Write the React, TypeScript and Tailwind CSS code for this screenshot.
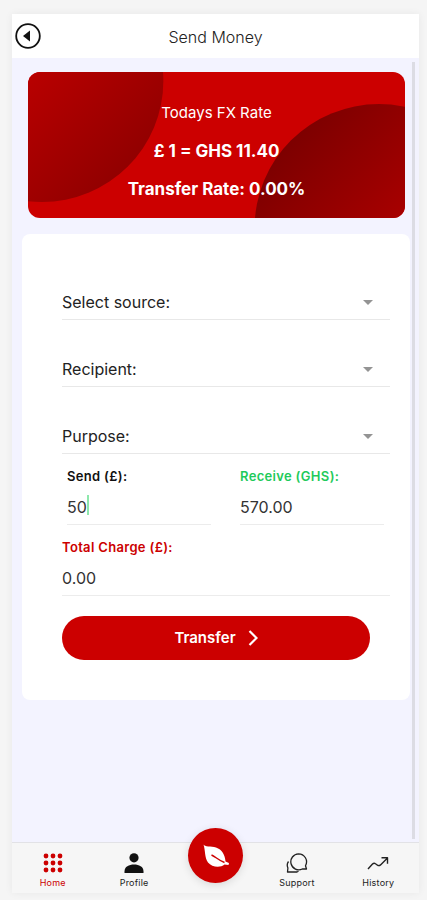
import { useId, type ReactNode } from "react";

function SelectField({ label }: { label: string }) {
  return (
    <div className="relative border-b border-[#e8e8e8]">
      <select
        aria-label={label}
        defaultValue=""
        className="block h-9 w-full appearance-none bg-transparent pt-[2px] text-base text-[#222] outline-none"
      >
        <option value="">{label}</option>
      </select>
      <svg viewBox="0 0 10 5" className="pointer-events-none absolute top-[17px] right-[17px] h-[5px] w-[10px]" fill="#949494">
        <path d="M0 0h10L5 5z" />
      </svg>
    </div>
  );
}

function AmountField({ label, value, tone, caret = false }: { label: string; value: string; tone: string; caret?: boolean }) {
  const id = useId();
  return (
    <div className="relative min-w-0 border-b border-[#ececec]">
      <label htmlFor={id} className={`block text-[13px] leading-5 font-semibold tracking-wide ${tone}`}>
        {label}
      </label>
      <input
        id={id}
        defaultValue={value}
        className="block h-[38px] w-full bg-transparent pt-[3px] text-base text-[#333] outline-none"
      />
      {caret && <span className="absolute top-[29px] left-5 h-5 w-[2px] bg-[#8ee8ac]" />}
    </div>
  );
}

function NavItem({ label, active = false, children }: { label: string; active?: boolean; children: ReactNode }) {
  return (
    <a
      href="#"
      className={`flex flex-1 flex-col items-center gap-1 pt-[10px] text-[9px] leading-3 tracking-wide ${active ? "text-[#cc0000]" : "text-[#222]"}`}
    >
      {children}
      {label}
    </a>
  );
}

export default function App() {
  return (
    <div className="flex min-h-screen flex-col bg-[#f5f5f5] pt-[14px] pr-2 pb-[7px] pl-3 font-['Inter',sans-serif]">
      <div className="flex flex-1 flex-col bg-[#f3f3ff] shadow-[0_0_8px_rgba(0,0,0,0.06)]">
        <header className="grid h-11 grid-cols-[32px_1fr_32px] items-center bg-white">
          <button aria-label="Back" className="flex justify-center">
            <svg viewBox="0 0 26 26" className="size-[26px]" fill="none">
              <circle cx="13" cy="13" r="11.8" stroke="#111" strokeWidth="1.8" />
              <path d="M8 13l7-5.5v11z" fill="#111" />
            </svg>
          </button>
          <h1 className="pt-px text-center text-base font-light text-[#222]">Send Money</h1>
        </header>

        <main className="flex flex-1 border-r-4 border-transparent">
          <div className="min-w-0 flex-1 pt-[14px] pr-[2px] pl-[10px]">
            <section className="relative mr-[5px] ml-[6px] flex h-[146px] flex-col items-center overflow-hidden rounded-xl bg-[#cc0000] pt-[29px] text-white">
              <svg viewBox="0 0 376 146" preserveAspectRatio="none" className="absolute inset-0 size-full">
                <defs>
                  <linearGradient id="leftShade" x1="0.3" y1="0.3" x2="0.85" y2="0.85">
                    <stop stopColor="#c80000" />
                    <stop offset="1" stopColor="#920000" />
                  </linearGradient>
                  <linearGradient id="rightShade" x1="0.1" y1="0.1" x2="0.7" y2="0.65">
                    <stop stopColor="#780000" />
                    <stop offset="1" stopColor="#b80000" />
                  </linearGradient>
                </defs>
                <circle cx="14" cy="9" r="121" fill="url(#leftShade)" />
                <circle cx="350" cy="156" r="124" fill="url(#rightShade)" />
              </svg>
              <p className="relative text-[15px] leading-6">Todays FX Rate</p>
              <p className="relative mt-[14px] text-[17px] leading-6 font-bold">£ 1 = GHS 11.40</p>
              <p className="relative mt-[14px] text-[17px] leading-6 font-bold">Transfer Rate: 0.00%</p>
            </section>

            <form className="mt-4 flex flex-col rounded-lg bg-white pt-[49px] pr-5 pb-10 pl-10">
              <div className="flex flex-col gap-[30px]">
                <SelectField label="Select source:" />
                <SelectField label="Recipient:" />
                <SelectField label="Purpose:" />
              </div>
              <div className="mt-3 mr-[6px] ml-[5px] grid grid-cols-2 gap-[29px]">
                <AmountField label="Send (£):" value="50" tone="text-[#111]" caret />
                <AmountField label="Receive (GHS):" value="570.00" tone="text-[#1fca5b]" />
              </div>
              <div className="mt-3">
                <AmountField label="Total Charge (£):" value="0.00" tone="text-[#cc0000]" />
              </div>
              <button
                type="button"
                className="mt-5 mr-5 flex h-11 items-center justify-center gap-3 rounded-full bg-[#cc0000] text-[15px] font-semibold text-white"
              >
                Transfer
                <svg viewBox="0 0 10 16" className="h-4 w-[10px]" fill="none" stroke="currentColor" strokeWidth="2.2">
                  <path d="M1.5 1l7 7-7 7" />
                </svg>
              </button>
            </form>
          </div>
          <div className="mt-1 mb-[3px] w-[3px] bg-[#dcdce4]" />
        </main>

        <nav className="flex h-[51px] border-t border-[#e2e2e6] bg-[#f6f6f6]">
          <NavItem label="Home" active>
            <svg viewBox="0 0 20 20" className="size-5" fill="currentColor">
              {[3, 10, 17].map((y) => [3, 10, 17].map((x) => <circle key={`${x}-${y}`} cx={x} cy={y} r="2.4" />))}
            </svg>
          </NavItem>
          <NavItem label="Profile">
            <svg viewBox="0 0 20 20" className="size-5" fill="#111">
              <circle cx="10" cy="4.8" r="4.6" />
              <path d="M.5 20v-1.5C.5 13.5 5 11.5 10 11.5s9.5 2 9.5 7V20z" />
            </svg>
          </NavItem>
          <div className="flex flex-1 justify-center">
            <button
              aria-label="Send money"
              className="-mt-[15px] flex size-[55px] items-center justify-center rounded-full bg-[#cc0000] shadow-[0_2px_8px_rgba(0,0,0,0.12)]"
            >
              <svg viewBox="0 0 28 24" className="h-6 w-7">
                <path d="M1.5 .5C2.500 3 9 2 14 3.500 20 5.500 23 11 23.500 17.500l3.500 1.500-.5 2-4-.5C18.500 24 10 23.500 6 18.500 2.500 13.500 3.500 6.500 1.500 .5z" fill="white" />
                <path d="M9.500 11c4.500 2 6.500 5 13 7.500" fill="none" stroke="#cc0000" strokeWidth="1.4" />
              </svg>
            </button>
          </div>
          <NavItem label="Support">
            <svg viewBox="0 0 22 20" className="h-5 w-[22px]" fill="none" stroke="#222" strokeWidth="1.3" strokeLinejoin="round">
              <path d="M12.500 .8a8 8 0 1 0 3.800 15.200h4.200l-1-3.300A8 8 0 0 0 12.500 .8z" />
              <path d="M2.500 8.500C1 10.500 1 13 1.900 15L1.500 19h9.500l1.500-.8" />
            </svg>
          </NavItem>
          <NavItem label="History">
            <svg viewBox="0 0 22 20" className="h-5 w-[22px]" fill="none" stroke="#222" strokeWidth="1.4" strokeLinejoin="round">
              <path d="M1 16l4.5-5q1.5-1.5 3-.3l2 1.5q1.500 1 3-.3L20.500 5M14.500 4.800h6v6" />
            </svg>
          </NavItem>
        </nav>
      </div>
    </div>
  );
}
